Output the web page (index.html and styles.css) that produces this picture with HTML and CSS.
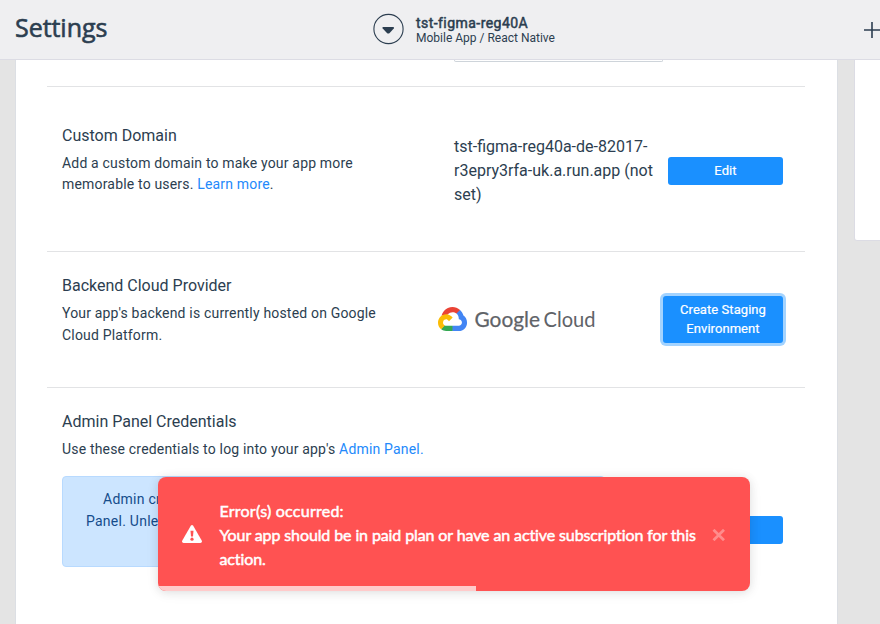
FILE: index.html
```html
<!DOCTYPE html>
<html lang="en">
<head>
<meta charset="utf-8">
<title>Settings</title>
<link rel="stylesheet" href="styles.css">
</head>
<body>
<header class="topbar">
  <h1 class="page-title">Settings</h1>
  <div class="app-switch">
    <svg class="app-caret" width="32" height="32" viewBox="0 0 32 32"><circle cx="15.5" cy="16" r="14.6" fill="none" stroke="#2c3e50" stroke-width="1.1"/><path d="M9.4 14.8Q9.4 14 10.2 14H20.2Q21.6 14.2 20.8 15.4L16.4 20.2Q15.2 21 14.2 20.2L9.7 15.6Z" fill="#2c3e50"/></svg>
    <div class="app-text">
      <div class="app-name">tst-figma-reg40A</div>
      <div class="app-kind">Mobile App / React Native</div>
    </div>
  </div>
  <svg class="plus" width="16" height="16" viewBox="0 0 16 16"><path d="M0 8H16M8 0V16" stroke="#2c3e50" stroke-width="1.6"/></svg>
</header>
<main class="content">
  <div class="card">
    <div class="field-end"></div>
    <section class="row domain">
      <div class="info">
        <h2>Custom Domain</h2>
        <p>Add a custom domain to make your app more<br>memorable to users. <a>Learn more</a>.</p>
      </div>
      <div class="url">tst-figma-reg40a-de-82017-<br>r3epry3rfa-uk.a.run.app (not<br>set)</div>
      <button class="btn">Edit</button>
    </section>
    <section class="row cloud">
      <div class="info">
        <h2>Backend Cloud Provider</h2>
        <p>Your app's backend is currently hosted on Google<br>Cloud Platform.</p>
      </div>
      <svg class="gcloud" width="164" height="32" viewBox="0 0 164 32">
        <g transform="translate(1 3) scale(.1135 .1165)">
          <path fill="#ea4335" d="M170.25 56.82 192.5 34.57 193.99 25.2C153.44-11.68 88.98-7.5 52.42 33.92 42.27 45.42 34.73 59.76 30.72 74.57L38.69 73.45 83.19 66.11 86.63 62.6C106.42 40.85 139.9 37.93 162.76 56.43Z"/>
          <path fill="#4285f4" d="M224.2 73.92C219.09 55.08 208.59 38.15 193.99 25.2L162.76 56.43C175.94 67.2 183.46 83.44 183.13 100.47V106.01C198.49 106.01 210.93 118.45 210.93 133.81 210.93 149.16 198.49 161.29 183.13 161.29H127.46L122 167.22V200.56L127.46 205.8H183.13C223.06 206.11 255.69 174.3 256 134.37 256.19 110.17 244.25 87.48 224.2 73.92Z"/>
          <path fill="#34a853" d="M71.87 205.8H127.46V161.29H71.87C67.91 161.29 64 160.44 60.39 158.8L52.42 161.24 30.17 183.49 28.24 191.04C40.79 200.51 56.15 205.78 71.87 205.8Z"/>
          <path fill="#fbbc05" d="M71.87 61.43C31.94 61.66-.24 94.23 0 134.16 .13 156.46 10.55 177.45 28.24 191.04L60.39 158.79C46.48 152.5 40.28 136.13 46.57 122.21 52.85 108.3 69.23 102.1 83.14 108.38 89.27 111.15 94.2 116.08 96.97 122.21L129.22 89.96C115.5 72.02 94.45 61.51 71.87 61.43Z"/>
        </g>
        <text class="g-word g-google" x="37.5" y="23" textLength="65.5" lengthAdjust="spacingAndGlyphs">Google</text>
        <text class="g-word g-cloud" x="106.5" y="23" textLength="52" lengthAdjust="spacingAndGlyphs">Cloud</text>
      </svg>
      <button class="btn focused">Create Staging<br>Environment</button>
    </section>
    <section class="row admin">
      <div class="info wide">
        <h2>Admin Panel Credentials</h2>
        <p>Use these credentials to log into your app's <a>Admin Panel.</a></p>
      </div>
      <div class="notice-line">
        <div class="notice"><span class="notice-first">Admin cr</span><br>Panel. Unle</div>
        <button class="btn"></button>
      </div>
    </section>
  </div>
  <aside class="side-card"></aside>
</main>
<div class="toast" role="alert">
  <svg class="warn" width="20" height="18" viewBox="0 0 20 18"><path d="M8.8.8Q10-.7 11.2.8L19.7 15.6Q20.5 17.7 18.4 18H1.6Q-.5 17.7.3 15.6Z" fill="#fff"/><path d="M8.5 5.8H11.5L11 11.6H9Z" fill="#ff5252"/><circle cx="10" cy="14.2" r="1.6" fill="#ff5252"/></svg>
  <div class="toast-text"><span class="toast-head">Error(s) occurred:</span><br>Your app should be in paid plan or have an active subscription for this<br>action.</div>
  <svg class="close" width="14" height="12" viewBox="0 0 14 12"><path d="M1.5 .8 12 11.2M12 .8 1.5 11.2" stroke="#ff8c8c" stroke-width="2.8"/></svg>
  <div class="progress"></div>
</div>
</body>
</html>
```
FILE: styles.css
```css
* { box-sizing: border-box; }
body {
  margin: 0;
  width: 880px;
  height: 624px;
  overflow: hidden;
  background: #e4e4e4;
  color: #2c3e50;
  font-family: Roboto, sans-serif;
}
.topbar {
  height: 60px;
  display: flex;
  background: #efeff1;
  border-bottom: 1px solid #dcdce4;
}
.page-title {
  width: 373px;
  margin: 0;
  padding: 11px 0 0 15px;
  font: 400 25px/32px "Open Sans", sans-serif;
  letter-spacing: -.05px;
  -webkit-text-stroke: .6px #2c3e50;
}
.app-switch { display: flex; width: 491px; padding-top: 13px; }
.app-text { padding: 2px 0 0 11px; }
.app-name { font-size: 14px; line-height: 16px; letter-spacing: .45px; -webkit-text-stroke: .5px #2c3e50; }
.app-kind { font-size: 12px; line-height: 14px; }
.plus { margin-top: 22px; flex: none; }
.content { display: flex; gap: 16px; height: 564px; }
.card {
  width: 823px;
  margin-left: 15px;
  padding: 0 32px 0 31px;
  background: #fff;
  border: solid #dcdfe4;
  border-width: 0 1px;
  flex: none;
}
.field-end {
  width: 209px;
  height: 2px;
  margin: 0 0 24px 407px;
  border: 1px solid #ced4da;
  border-top: 0;
  border-radius: 0 0 3px 3px;
}
.row { border-top: 1px solid #e2e3e5; padding: 0 22px 0 15px; display: flex; }
.domain { height: 165px; }
.cloud { height: 136px; }
.admin { display: block; }
.info { width: 376px; padding-top: 38px; flex: none; }
.cloud .info, .admin .info { padding-top: 23px; }
.admin .info { width: auto; }
h2 { margin: 0; font-weight: 400; font-size: 16px; line-height: 22px; }
p { margin: 6px 0 0; font-size: 14px; line-height: 21.5px; letter-spacing: .18px; }
.domain p { line-height: 21px; }
a { color: #2389fb; }
.url { width: 230px; padding: 48px 0 0 16px; font-size: 16px; line-height: 24px; white-space: nowrap; }
.btn {
  width: 115px;
  height: 28px;
  padding: 0;
  border: 0;
  border-radius: 3px;
  background: #1a90ff;
  color: #fff;
  font: 400 13px/18px Roboto, sans-serif;
  letter-spacing: .06px;
  -webkit-text-stroke: .2px #fff;
  flex: none;
}
.domain .btn { margin-top: 70px; }
.gcloud { margin: 52px 60px 0 -1px; flex: none; }
.g-word { font-family: Lato, sans-serif; fill: #5f6368; }
.g-google { font-size: 22px; stroke: #5f6368; stroke-width: .25px; }
.g-cloud { font-size: 21.5px; }
.cloud .focused { width: 120px; height: 47px; margin: 44px 0 0 2px; padding-bottom: 2px; line-height: 19px; box-shadow: 0 0 0 3px #a3d3ff; }
.notice-line { display: flex; align-items: flex-start; margin-top: 15px; }
.notice {
  width: 543px;
  height: 91px;
  padding: 11px 23px;
  border: 1px solid #b8daff;
  border-radius: 4px;
  background: #cce5ff;
  color: #154c8b;
  font-size: 14px;
  line-height: 22px;
  letter-spacing: .25px;
}
.notice-first { padding-left: 17px; }
.notice-line .btn { margin: 40px 0 0 63px; }
.side-card {
  width: 40px;
  height: 181px;
  flex: none;
  background: #fff;
  border: 1px solid #dcdce4;
  border-top: 0;
  border-radius: 0 0 0 3px;
}
.toast {
  position: absolute;
  left: 158px;
  top: 477px;
  width: 592px;
  height: 114px;
  padding: 22px 24px 0;
  display: flex;
  overflow: hidden;
  border-radius: 8px;
  background: #ff5252;
  color: #fff;
  box-shadow: 0 1px 10px rgba(0,0,0,.1), 0 2px 15px rgba(0,0,0,.05);
}
.warn { margin: 26px 17.5px 0 0; flex: none; }
.toast-text { width: 492px; font: 400 16px/24px Lato, sans-serif; letter-spacing: -.11px; -webkit-text-stroke: .5px #fff; white-space: nowrap; }
.toast-head { letter-spacing: .24px; }
.close { margin-top: 30px; flex: none; }
.progress { position: absolute; left: 0; bottom: 0; width: 318px; height: 5px; background: #ffcbcb; }
```
